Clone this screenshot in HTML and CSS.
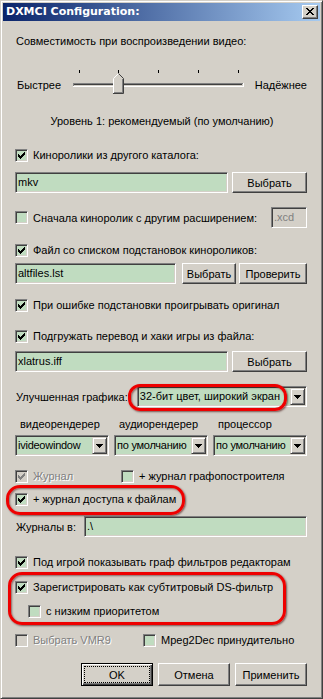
FILE: index.html
```html
<!DOCTYPE html>
<html>
<head>
<meta charset="utf-8">
<link rel="stylesheet" href="styles.css">
</head>
<body>
<div class="window">
  <div class="titlebar">
    <span class="title">DXMCI Configuration:</span>
    <span class="close"><svg width="8" height="7" viewBox="0 0 8 7" shape-rendering="crispEdges"><path d="M0 0h2v1H0z M6 0h2v1H6z M1 1h2v1H1z M5 1h2v1H5z M2 2h4v1H2z M3 3h2v1H3z M2 4h4v1H2z M1 5h2v1H1z M5 5h2v1H5z M0 6h2v1H0z M6 6h2v1H6z" fill="#000"/></svg></span>
  </div>
  <div class="panel">
    <div class="row m13 indent">Совместимость при воспроизведении видео:</div>

    <div class="slider m18">
      <span class="slabel">Быстрее</span>
      <svg class="track" width="180" height="30" viewBox="0 0 180 30" shape-rendering="crispEdges">
        <rect x="11" y="4" width="1" height="3" fill="#000"/>
        <rect x="50" y="4" width="1" height="3" fill="#000"/>
        <rect x="90" y="4" width="1" height="3" fill="#000"/>
        <rect x="130" y="4" width="1" height="3" fill="#000"/>
        <rect x="170" y="4" width="1" height="3" fill="#000"/>
        <rect x="5" y="17" width="170" height="1" fill="#808080"/>
        <rect x="5" y="17" width="1" height="4" fill="#808080"/>
        <rect x="6" y="18" width="168" height="1" fill="#404040"/>
        <rect x="5" y="20" width="171" height="1" fill="#fff"/>
        <rect x="175" y="17" width="1" height="4" fill="#fff"/>
        <g transform="translate(45,7)">
          <polygon points="0,5 5,0 10,5 10,20 0,20" fill="#d4d0c8"/>
          <polyline points="0.5,20 0.5,5.5 5.5,0.5" fill="none" stroke="#fff" stroke-width="1" shape-rendering="auto"/>
          <polyline points="5.5,0.5 10.5,5.5 10.5,20.5 0,20.5" fill="none" stroke="#404040" stroke-width="1" shape-rendering="auto"/>
          <polyline points="9.5,6 9.5,19.5 1,19.5" fill="none" stroke="#808080" stroke-width="1"/>
        </g>
      </svg>
      <span class="slabel2">Надёжнее</span>
    </div>

    <div class="row m18 center">Уровень 1: рекомендуемый (по умолчанию)</div>

    <div class="row m20">
      <span class="cb"><svg class="tick" width="7" height="7" viewBox="0 0 7 7" shape-rendering="crispEdges"><path d="M0 2h1v3H0z M1 3h1v3H1z M2 4h1v3H2z M3 3h1v3H3z M4 2h1v3H4z M5 1h1v3H5z M6 0h1v3H6z"/></svg></span>
      <span class="lbl">Киноролики из другого каталога:</span>
    </div>

    <div class="frow m10">
      <span class="field grow"><span class="val">mkv</span></span>
      <span class="button w75">Выбрать</span>
    </div>

    <div class="frow m14">
      <span class="cb"></span>
      <span class="lbl">Сначала киноролик с другим расширением:</span>
      <span class="field small disabled"><span class="val">.xcd</span></span>
    </div>

    <div class="row m15">
      <span class="cb"><svg class="tick" width="7" height="7" viewBox="0 0 7 7" shape-rendering="crispEdges"><path d="M0 2h1v3H0z M1 3h1v3H1z M2 4h1v3H2z M3 3h1v3H3z M4 2h1v3H4z M5 1h1v3H5z M6 0h1v3H6z"/></svg></span>
      <span class="lbl">Файл со списком подстановок кинороликов:</span>
    </div>

    <div class="frow m6">
      <span class="field grow"><span class="val">altfiles.lst</span></span>
      <span class="button w54 g6">Выбрать</span>
      <span class="button w68 g3">Проверить</span>
    </div>

    <div class="row m14">
      <span class="cb"><svg class="tick" width="7" height="7" viewBox="0 0 7 7" shape-rendering="crispEdges"><path d="M0 2h1v3H0z M1 3h1v3H1z M2 4h1v3H2z M3 3h1v3H3z M4 2h1v3H4z M5 1h1v3H5z M6 0h1v3H6z"/></svg></span>
      <span class="lbl">При ошибке подстановки проигрывать оригинал</span>
    </div>

    <div class="row m17">
      <span class="cb"><svg class="tick" width="7" height="7" viewBox="0 0 7 7" shape-rendering="crispEdges"><path d="M0 2h1v3H0z M1 3h1v3H1z M2 4h1v3H2z M3 3h1v3H3z M4 2h1v3H4z M5 1h1v3H5z M6 0h1v3H6z"/></svg></span>
      <span class="lbl">Подгружать перевод и хаки игры из файла:</span>
    </div>

    <div class="frow m8">
      <span class="field grow"><span class="val">xlatrus.iff</span></span>
      <span class="button w75">Выбрать</span>
    </div>

    <div class="frow m14 rel">
      <span class="lbl indent">Улучшенная графика:</span>
      <span class="combo grow g9"><span class="val">32-бит цвет, широкий экран</span><span class="dd"><svg width="7" height="4" viewBox="0 0 7 4" shape-rendering="crispEdges"><path d="M0 0h7v1H0z M1 1h5v1H1z M2 2h3v1H2z M3 3h1v1H3z"/></svg></span></span>
      <span class="mark mark-combo"></span>
    </div>

    <div class="grid3 m10 labels">
      <span>видеорендерер</span>
      <span>аудиорендерер</span>
      <span>процессор</span>
    </div>

    <div class="grid3 m4">
      <span class="combo"><span class="val">ivideowindow</span><span class="dd"><svg width="7" height="4" viewBox="0 0 7 4" shape-rendering="crispEdges"><path d="M0 0h7v1H0z M1 1h5v1H1z M2 2h3v1H2z M3 3h1v1H3z"/></svg></span></span>
      <span class="combo"><span class="val">по умолчанию</span><span class="dd"><svg width="7" height="4" viewBox="0 0 7 4" shape-rendering="crispEdges"><path d="M0 0h7v1H0z M1 1h5v1H1z M2 2h3v1H2z M3 3h1v1H3z"/></svg></span></span>
      <span class="combo"><span class="val">по умолчанию</span><span class="dd"><svg width="7" height="4" viewBox="0 0 7 4" shape-rendering="crispEdges"><path d="M0 0h7v1H0z M1 1h5v1H1z M2 2h3v1H2z M3 3h1v1H3z"/></svg></span></span>
    </div>

    <div class="row m13">
      <span class="item w106">
        <span class="cb off"><svg class="tick" width="7" height="7" viewBox="0 0 7 7" shape-rendering="crispEdges"><path d="M0 2h1v3H0z M1 3h1v3H1z M2 4h1v3H2z M3 3h1v3H3z M4 2h1v3H4z M5 1h1v3H5z M6 0h1v3H6z"/></svg></span>
        <span class="lbl dis">Журнал</span>
      </span>
      <span class="item">
        <span class="cb"></span>
        <span class="lbl">+ журнал графопостроителя</span>
      </span>
    </div>

    <div class="row m9 rel">
      <span class="cb"><svg class="tick" width="7" height="7" viewBox="0 0 7 7" shape-rendering="crispEdges"><path d="M0 2h1v3H0z M1 3h1v3H1z M2 4h1v3H2z M3 3h1v3H3z M4 2h1v3H4z M5 1h1v3H5z M6 0h1v3H6z"/></svg></span>
      <span class="lbl">+ журнал доступа к файлам</span>
      <span class="mark mark-log"></span>
    </div>

    <div class="frow m10">
      <span class="lbl indent">Журналы в:</span>
      <span class="field grow g8"><span class="val">.\</span></span>
    </div>

    <div class="row m18">
      <span class="cb"><svg class="tick" width="7" height="7" viewBox="0 0 7 7" shape-rendering="crispEdges"><path d="M0 2h1v3H0z M1 3h1v3H1z M2 4h1v3H2z M3 3h1v3H3z M4 2h1v3H4z M5 1h1v3H5z M6 0h1v3H6z"/></svg></span>
      <span class="lbl">Под игрой показывать граф фильтров редакторам</span>
    </div>

    <div class="row m11 rel">
      <span class="cb"><svg class="tick" width="7" height="7" viewBox="0 0 7 7" shape-rendering="crispEdges"><path d="M0 2h1v3H0z M1 3h1v3H1z M2 4h1v3H2z M3 3h1v3H3z M4 2h1v3H4z M5 1h1v3H5z M6 0h1v3H6z"/></svg></span>
      <span class="lbl">Зарегистрировать как субтитровый DS-фильтр</span>
      <span class="mark mark-reg"></span>
    </div>

    <div class="row m10 sub">
      <span class="cb"></span>
      <span class="lbl">с низким приоритетом</span>
    </div>

    <div class="row m15">
      <span class="item w128">
        <span class="cb off"></span>
        <span class="lbl dis">Выбрать VMR9</span>
      </span>
      <span class="item">
        <span class="cb"></span>
        <span class="lbl">Mpeg2Dec принудительно</span>
      </span>
    </div>

    <div class="buttons m16">
      <span class="button bb default"><span class="focus">OK</span></span>
      <span class="button bb">Отмена</span>
      <span class="button bb">Применить</span>
    </div>
  </div>
</div>
</body>
</html>
```

FILE: styles.css
```css
* { box-sizing: border-box; }
html, body { margin: 0; padding: 0; }
body {
  background: #d4d0c8;
  font-family: "Liberation Sans", Arial, sans-serif;
  font-size: 11px;
  color: #000;
}
.window {
  width: 323px;
  height: 699px;
  border: 1px solid;
  border-color: #d4d0c8 #404040 #404040 #d4d0c8;
  box-shadow: inset 1px 1px #fff, inset -1px -1px #808080;
  padding: 2px;
  background: #d4d0c8;
  display: flex;
  flex-direction: column;
  overflow: hidden;
}
.titlebar {
  height: 18px;
  flex: none;
  background: linear-gradient(to right, #0a246a, #a6caf0);
  display: flex;
  align-items: center;
  padding: 0 2px 0 3px;
}
.title {
  flex: 1;
  color: #fff;
  font-family: "DejaVu Sans", sans-serif;
  font-weight: bold;
  font-size: 11px;
  line-height: 18px;
}
.close {
  width: 16px;
  height: 14px;
  background: #d4d0c8;
  border: 1px solid;
  border-color: #fff #404040 #404040 #fff;
  box-shadow: inset -1px -1px #808080;
  display: flex;
  align-items: center;
  justify-content: center;
  padding-bottom: 1px;
}
.panel {
  padding: 0 13px 0 12px;
  display: flex;
  flex-direction: column;
}
.row {
  display: flex;
  align-items: center;
  height: 14px;
  line-height: 14px;
  white-space: nowrap;
}
.rel { position: relative; }
.indent { padding-left: 1px; }
.center { justify-content: center; padding-left: 2px; }
.sub { padding-left: 13px; }
.frow {
  display: flex;
  align-items: center;
  height: 21px;
  white-space: nowrap;
}
.grow { flex: 1; }
.g3 { margin-left: 3px; }
.g6 { margin-left: 6px; }
.g8 { margin-left: 8px; }
.g9 { margin-left: 9px; }

.m4 { margin-top: 4px; }
.m6 { margin-top: 6px; }
.m8 { margin-top: 8px; }
.m9 { margin-top: 9px; }
.m10 { margin-top: 10px; }
.m11 { margin-top: 11px; }
.m13 { margin-top: 13px; }
.m14 { margin-top: 14px; }
.m15 { margin-top: 15px; }
.m16 { margin-top: 16px; }
.m17 { margin-top: 17px; }
.m18 { margin-top: 18px; }
.m20 { margin-top: 20px; }

/* slider */
.slider {
  display: flex;
  align-items: flex-start;
  height: 30px;
  white-space: nowrap;
}
.slabel { width: 53px; padding-left: 2px; line-height: 14px; margin-top: 12px; }
.slabel2 { margin-left: 7px; line-height: 14px; margin-top: 12px; }
.track { display: block; flex: none; }

/* checkbox */
.cb {
  width: 13px;
  height: 13px;
  flex: none;
  background: #c0dcc0;
  border: 1px solid;
  border-color: #808080 #fff #fff #808080;
  box-shadow: inset 1px 1px #404040, inset -1px -1px #d4d0c8;
  position: relative;
}
.cb .tick { position: absolute; left: 2px; top: 2px; fill: #000; display: block; }
.cb.off { background: #d4d0c8; }
.cb.off .tick { fill: #808080; }
.lbl { margin-left: 5px; line-height: 14px; }
.lbl.indent { margin-left: 0; }
.frow > .lbl:first-child { margin-left: 0; }
.dis { color: #808080; text-shadow: 1px 1px #fff; }
.item { display: flex; align-items: center; }
.w106 { width: 106px; }
.w128 { width: 128px; }

/* fields */
.field, .combo {
  height: 21px;
  background: #c0dcc0;
  border: 1px solid;
  border-color: #808080 #fff #fff #808080;
  box-shadow: inset 1px 1px #404040, inset -1px -1px #d4d0c8;
  display: flex;
  align-items: center;
  overflow: hidden;
  min-width: 0;
}
.field .val { padding-left: 2px; line-height: 17px; }
.field.small { width: 36px; margin-left: auto; flex: none; }
.field.disabled { background: #d4d0c8; color: #808080; }

.combo { padding: 1px; }
.combo .val { flex: 1; padding-left: 1px; line-height: 17px; white-space: nowrap; overflow: hidden; }
.combo .dd {
  width: 15px;
  height: 17px;
  flex: none;
  background: #d4d0c8;
  border: 1px solid;
  border-color: #d4d0c8 #404040 #404040 #d4d0c8;
  box-shadow: inset 1px 1px #fff, inset -1px -1px #808080;
  display: flex;
  align-items: center;
  justify-content: center;
}
.combo .dd svg { display: block; fill: #000; }

.grid3 {
  display: grid;
  grid-template-columns: 94px 94px 94px;
  column-gap: 5px;
  white-space: nowrap;
}
.labels { height: 14px; line-height: 14px; }
.labels span { padding-left: 5px; }
.grid3 .combo { width: 94px; }
.grid3 .combo .val { letter-spacing: -0.25px; }

/* buttons */
.button {
  height: 21px;
  flex: none;
  background: #d4d0c8;
  border: 1px solid;
  border-color: #fff #404040 #404040 #fff;
  box-shadow: inset -1px -1px #808080;
  display: flex;
  align-items: center;
  justify-content: center;
  line-height: 14px;
}
.w75 { width: 75px; margin-left: 4px; }
.w54 { width: 54px; }
.w68 { width: 68px; }
.buttons {
  display: flex;
  justify-content: flex-end;
  column-gap: 5px;
}
.bb { width: 72px; height: 23px; }
.default {
  border: 1px solid #000;
  box-shadow: inset 1px 1px #fff, inset -1px -1px #404040, inset -2px -2px #808080;
}
.focus {
  display: flex;
  align-items: center;
  justify-content: center;
  width: 64px;
  height: 15px;
  outline: 1px dotted #000;
}

/* red highlight marks */
.mark {
  position: absolute;
  border: 3px solid #ee0000;
  box-shadow: 1px 1px 2px rgba(60, 0, 0, 0.6), inset 1px 1px 2px rgba(60, 0, 0, 0.5);
  pointer-events: none;
}
.mark-combo { left: 113px; top: -2px; width: 159px; height: 27px; border-radius: 12px; }
.mark-log { left: -9px; top: -7px; width: 179px; height: 30px; border-radius: 14px; }
.mark-reg { left: -7px; top: -8px; width: 278px; height: 53px; border-radius: 14px; }
```
